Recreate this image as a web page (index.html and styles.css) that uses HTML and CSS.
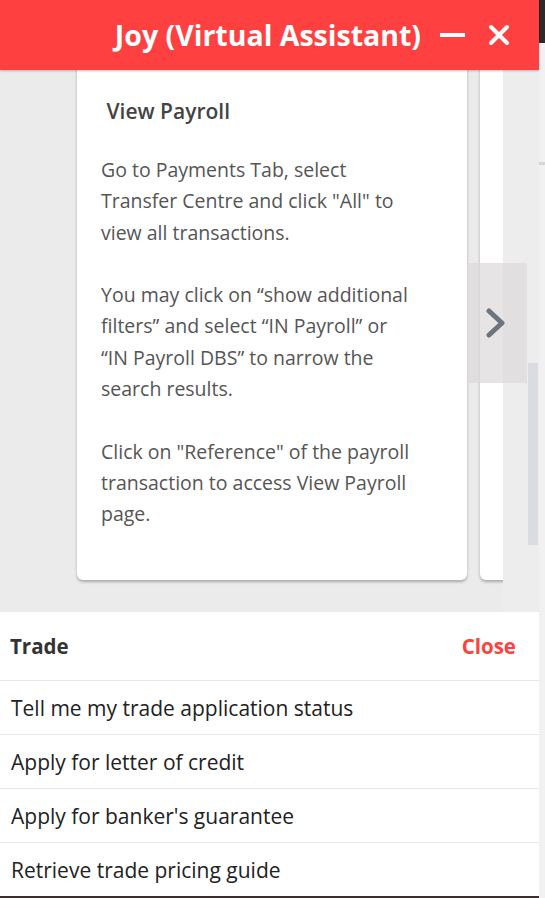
FILE: index.html
```html
<!DOCTYPE html>
<html lang="en">
<head>
    <meta charset="UTF-8">
    <meta name="viewport" content="width=device-width, initial-scale=1.0">
    <title>Joy (Virtual Assistant)</title>
    <link rel="stylesheet" href="styles.css">
</head>
<body>
    <div class="chat">
        <div class="header">
            <span class="title">Joy (Virtual Assistant)</span>
            <span class="minimise"></span>
            <svg class="close-icon" width="22" height="22" viewBox="0 0 22 22">
                <path d="M3 3 L19 19 M19 3 L3 19" stroke="#fff" stroke-width="4" stroke-linecap="round"/>
            </svg>
        </div>

        <div class="carousel">
            <div class="track">
                <div class="card">
                    <p class="card-title">&nbsp;View Payroll</p>
                    <p class="card-text">Go to Payments Tab, select Transfer Centre and click "All" to view all transactions.<br><br>You may click on “show additional filters” and select “IN Payroll” or “IN Payroll DBS” to narrow the search results.<br><br>Click on "Reference" of the payroll transaction to access View Payroll page.</p>
                </div>
                <div class="card next-card"></div>
            </div>
            <div class="next">
                <svg width="22" height="30" viewBox="0 0 22 30">
                    <path d="M4 3 L17 15 L4 27" fill="none" stroke="#6c757d" stroke-width="5" stroke-linecap="round" stroke-linejoin="round"/>
                </svg>
            </div>
            <div class="thumb"></div>
        </div>

        <div class="menu">
            <div class="menu-head">
                <span class="menu-title">Trade</span>
                <span class="menu-close">Close</span>
            </div>
            <div class="menu-item">Tell me my trade application status</div>
            <div class="menu-item">Apply for letter of credit</div>
            <div class="menu-item">Apply for banker's guarantee</div>
            <div class="menu-item">Retrieve trade pricing guide</div>
        </div>
    </div>
    <div class="page-edge">
        <div class="edge-top"></div>
        <div class="edge-line"></div>
    </div>
</body>
</html>
```

FILE: styles.css
```css
html,body{
    margin: 0;
    padding: 0;
    height: 898px;
    overflow: hidden;
}
body{
    display: flex;
    font-family: "Open Sans", "Liberation Sans", sans-serif;
    background-color: #f1f1f1;
}
.chat{
    width: 539px;
    height: 898px;
    display: flex;
    flex-direction: column;
    position: relative;
}
.header{
    height: 70px;
    background-color: #ff4040;
    display: flex;
    align-items: center;
    justify-content: flex-end;
    padding-right: 29px;
    box-shadow: 0 1px 2px rgba(0,0,0,0.25);
    position: relative;
    z-index: 2;
    flex-shrink: 0;
}
.title{
    color: white;
    font-weight: bold;
    font-size: 28.5px;
    margin-top: -1px;
}
.minimise{
    width: 25px;
    height: 4px;
    background-color: white;
    margin-left: 19px;
    margin-top: -1px;
}
.close-icon{
    margin-left: 23px;
    margin-top: -1px;
}
.carousel{
    height: 542px;
    background-color: #ededed;
    position: relative;
    flex-shrink: 0;
}
.track{
    width: 503px;
    height: 100%;
    overflow: hidden;
    background-color: #ebebeb;
    display: flex;
    gap: 13px;
    padding-left: 77px;
    box-sizing: border-box;
}
.card{
    flex-shrink: 0;
    width: 390px;
    height: 520px;
    margin-top: -10px;
    background-color: white;
    border-radius: 6px;
    box-shadow: 0 2px 3px rgba(0,0,0,0.28);
    padding: 0 24px;
    box-sizing: border-box;
}
.card-title{
    margin: 0;
    padding-top: 37px;
    font-size: 21px;
    font-weight: 600;
    color: #444;
}
.card-text{
    width: 318px;
    margin: 29px 0 0 0;
    font-size: 19.5px;
    line-height: 31.3px;
    color: #555;
}
.next{
    position: absolute;
    left: 467px;
    top: 193px;
    width: 60px;
    height: 120px;
    background-color: rgba(219,216,216,0.7);
    display: flex;
    align-items: center;
    justify-content: center;
}
.next svg{
    margin-left: -2px;
}
.thumb{
    position: absolute;
    left: 528px;
    top: 293px;
    width: 10px;
    height: 182px;
    background-color: #d9dde1;
}
.menu{
    flex: 1;
    background-color: white;
    border-bottom: 2px solid #3a2e2e;
}
.menu-head{
    height: 68px;
    display: flex;
    align-items: center;
    justify-content: space-between;
    padding: 0 23px 0 10px;
    border-bottom: 1px solid #e6e6e6;
}
.menu-title{
    font-size: 20.5px;
    font-weight: bold;
    color: #333;
}
.menu-close{
    font-size: 20.5px;
    font-weight: bold;
    color: #ff4040;
}
.menu-item{
    height: 53px;
    display: flex;
    align-items: center;
    padding-left: 11px;
    font-size: 21px;
    color: #222;
    border-bottom: 1px solid #e6e6e6;
}
.menu-item:last-child{
    border-bottom: none;
}
.page-edge{
    width: 6px;
    display: flex;
    flex-direction: column;
}
.edge-top{
    height: 43px;
    background-color: #2b2b2b;
}
.edge-line{
    height: 3px;
    margin-top: 119px;
    background-color: #d6d6d6;
}
```
